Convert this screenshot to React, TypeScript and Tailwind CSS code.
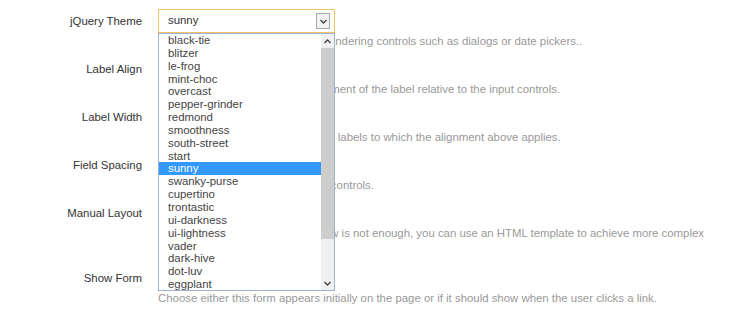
const themes = [
  'black-tie', 'blitzer', 'le-frog', 'mint-choc', 'overcast', 'pepper-grinder', 'redmond',
  'smoothness', 'south-street', 'start', 'sunny', 'swanky-purse', 'cupertino', 'trontastic',
  'ui-darkness', 'ui-lightness', 'vader', 'dark-hive', 'dot-luv', 'eggplant', 'excite-bike',
  'flick', 'hot-sneaks', 'humanity',
];

const Chevron = ({ up }: { up?: boolean }) => (
  <svg width="7" height="5" viewBox="0 0 7 5" className={up ? 'rotate-180' : ''}>
    <path d="M0.5 1 L3.5 4 L6.5 1" fill="none" stroke="#444" strokeWidth="1.4" />
  </svg>
);

const ThemeDropdown = () => (
  <div className="absolute left-0 top-full z-10 flex h-[258px] w-[177px] border border-[#9fb3cc] bg-white">
    <div className="flex-1 overflow-hidden">
      {themes.map((t) => (
        <div
          key={t}
          className={
            t === 'sunny'
              ? 'h-[12.85px] bg-[#3399ff] pl-[9px] leading-[12.85px] text-white'
              : 'h-[12.85px] pl-[9px] leading-[12.85px] text-[#444]'
          }
        >
          {t}
        </div>
      ))}
    </div>
    <div className="flex w-[13px] flex-col bg-[#f0f0f0]">
      <div className="flex h-[14px] items-center justify-center">
        <Chevron up />
      </div>
      <div className="h-[191px] bg-[#cdcdcd]" />
      <div className="flex-1" />
      <div className="flex h-[14px] items-center justify-center">
        <Chevron />
      </div>
    </div>
  </div>
);

interface FieldRowProps {
  label: string;
  desc: string;
  children?: React.ReactNode;
}

const FieldRow = ({ label, desc, children }: FieldRowProps) => (
  <div className="mb-[7px] flex">
    <div className="w-[158px] shrink-0 pr-4 text-right leading-[24px] text-[#333]">{label}</div>
    <div className="w-[560px]">
      <div className="relative h-[24px] w-[177px]">{children}</div>
      <p className="leading-[17px] text-[#999]">{desc}</p>
    </div>
  </div>
);

export default function App() {
  return (
    <div className="min-h-[310px] bg-white pt-[9px] font-['Liberation_Sans',Arial,sans-serif] text-[11.4px]">
      <FieldRow
        label="jQuery Theme"
        desc="The jQuery UI theme used when rendering controls such as dialogs or date pickers.."
      >
        <div className="flex h-[24px] items-center border border-[#f0c16e] pl-[9px] pr-[4px] text-[#333]">
          <span className="flex-1">sunny</span>
          <span className="flex h-[16px] w-[14px] items-center justify-center border border-[#a9a9a9] bg-[#f2f2f2]">
            <Chevron />
          </span>
        </div>
        <ThemeDropdown />
      </FieldRow>
      <FieldRow label="Label Align" desc="Specifies the horizontal label alignment of the label relative to the input controls." />
      <FieldRow label="Label Width" desc="The width in pixels reserved for the labels to which the alignment above applies." />
      <FieldRow label="Field Spacing" desc="The vertical gap between all input controls." />
      <FieldRow
        label="Manual Layout"
        desc="If the automatic layout shown below is not enough, you can use an HTML template to achieve more complex layouts."
      />
      <FieldRow
        label="Show Form"
        desc="Choose either this form appears initially on the page or if it should show when the user clicks a link."
      />
    </div>
  );
}
